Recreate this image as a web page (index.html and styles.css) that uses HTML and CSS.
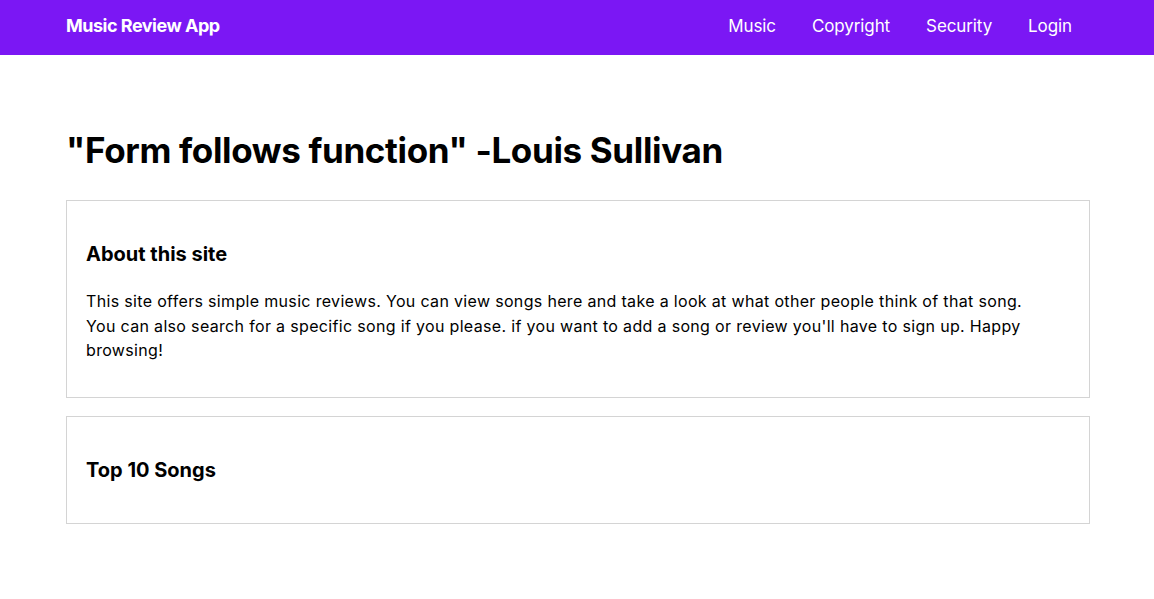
FILE: index.html
```html
<!DOCTYPE html>
<html lang="en">
<head>
<meta charset="utf-8">
<title>Music Review App</title>
<link rel="stylesheet" href="styles.css">
</head>
<body>
<header class="navbar">
  <div class="nav-inner">
    <a class="brand" href="#">Music Review App</a>
    <nav class="nav-links">
      <a href="#">Music</a>
      <a href="#">Copyright</a>
      <a href="#">Security</a>
      <a href="#">Login</a>
    </nav>
  </div>
</header>
<main class="container">
  <h1 class="title">"Form follows function" -Louis Sullivan</h1>
  <section class="card">
    <h3 class="card-title">About this site</h3>
    <p class="card-text">This site offers simple music reviews. You can view songs here and take a look at what other people think of that song. You can also search for a specific song if you please. if you want to add a song or review you'll have to sign up. Happy browsing!</p>
  </section>
  <section class="card">
    <h3 class="card-title">Top 10 Songs</h3>
  </section>
</main>
</body>
</html>
```
FILE: styles.css
```css
* { box-sizing: border-box; }
body {
  margin: 0;
  font-family: Inter, "Noto Sans", sans-serif;
  color: #000;
  background: #fff;
}
a { text-decoration: none; color: inherit; }

.navbar {
  background: #7b17f4;
  height: 55px;
  color: #fff;
}
.nav-inner {
  margin: 0 64px 0 66px;
  height: 100%;
  display: flex;
  align-items: center;
  justify-content: space-between;
  padding-bottom: 4px;
}
.brand {
  font-weight: 700;
  font-size: 18px;
  letter-spacing: -0.5px;
}
.nav-links {
  display: flex;
}
.nav-links a {
  font-size: 17px;
  padding: 0 18px;
  letter-spacing: -0.1px;
}

.container {
  margin: 0 64px 0 66px;
  padding-top: 74px;
}
.title {
  font-size: 35px;
  font-weight: 700;
  line-height: 42px;
  letter-spacing: -0.35px;
  margin: 0 0 29px;
}
.card {
  border: 1px solid #d4d4d4;
  padding: 20px 19px;
  margin-bottom: 18px;
}
.card-title {
  font-size: 20px;
  font-weight: 700;
  line-height: 24px;
  margin: 21px 0;
}
.card-text {
  max-width: 955px;
  font-size: 16px;
  line-height: 24.5px;
  letter-spacing: 0.33px;
  margin: 23px 0 14px;
}
```
